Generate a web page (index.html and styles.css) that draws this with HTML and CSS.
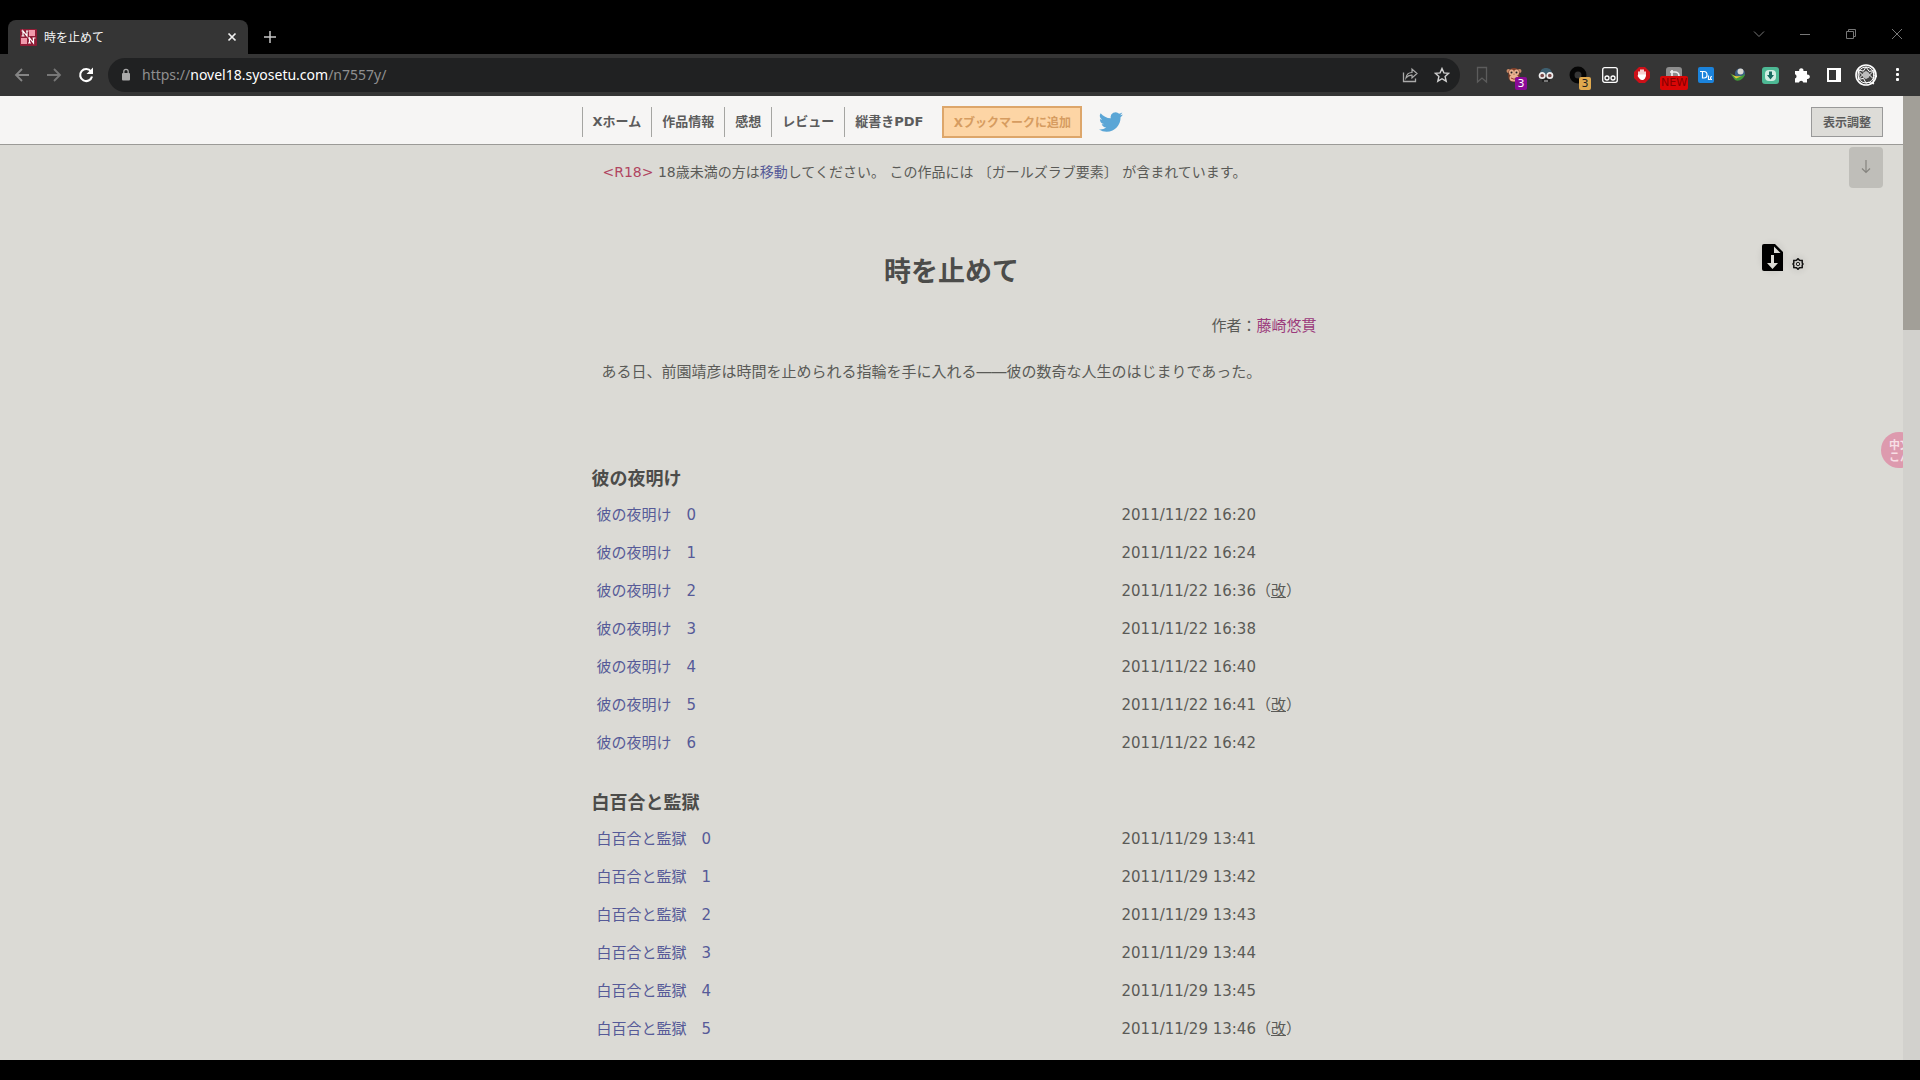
FILE: index.html
```html
<!DOCTYPE html>
<html lang="ja">
<head>
<meta charset="utf-8">
<title>時を止めて</title>
<link rel="stylesheet" href="styles.css">
</head>
<body>
<div class="tabstrip">
  <div class="tab">
    <svg class="favicon" width="17" height="17" viewBox="0 0 17 17"><rect width="17" height="17" rx="1" fill="#8f1c36"/><path d="M9 1h6v6H9zM1 9h6v6H1z" fill="#f09aac"/><path d="M3 7V2l4 5V2M1.500 2H3M6 2h2.500M1.500 7h3M9.500 14V9l4 5V9M8 9h1.500M12.500 9h3M8 14h3" fill="none" stroke="#fff" stroke-width="1.200"/></svg>
    <span class="tab-title">時を止めて</span>
    <button class="plain" aria-label="タブを閉じる"><svg width="10" height="10" viewBox="0 0 10 10"><path d="M1.500 1.500l7 7m0-7l-7 7" stroke="#f0f0f0" stroke-width="1.700"/></svg></button>
  </div>
  <button class="plain new-tab" aria-label="新しいタブ"><svg width="14" height="14" viewBox="0 0 14 14"><path d="M7 1v12M1 7h12" stroke="#c8c8c8" stroke-width="1.500"/></svg></button>
  <div class="window-controls">
    <button class="plain" aria-label="タブを検索"><svg width="12" height="12" viewBox="0 0 12 12"><path d="M1 3.500l5 5 5-5" fill="none" stroke="#777"/></svg></button>
    <button class="plain" aria-label="最小化"><svg width="12" height="12" viewBox="0 0 12 12"><path d="M1 6.500h10" stroke="#777"/></svg></button>
    <button class="plain" aria-label="元に戻す"><svg width="12" height="12" viewBox="0 0 12 12"><path d="M1.500 3.500h7v7h-7zM3.500 3.500v-2h7v7h-2" fill="none" stroke="#777"/></svg></button>
    <button class="plain" aria-label="閉じる"><svg width="12" height="12" viewBox="0 0 12 12"><path d="M1 1l10 10M11 1L1 11" stroke="#777"/></svg></button>
  </div>
</div>

<div class="toolbar">
  <div class="nav-buttons">
    <button class="plain" aria-label="戻る"><svg width="16" height="16" viewBox="0 0 16 16"><path d="M15 8H2M8 2L2 8l6 6" fill="none" stroke="#858585" stroke-width="1.800"/></svg></button>
    <button class="plain" aria-label="進む"><svg width="16" height="16" viewBox="0 0 16 16"><path d="M1 8h13M8 2l6 6-6 6" fill="none" stroke="#777" stroke-width="1.800"/></svg></button>
    <button class="plain" aria-label="再読み込み"><svg width="16" height="16" viewBox="0 0 16 16"><path d="M13 4.500A6 6 0 1 0 14 9.500" fill="none" stroke="#fff" stroke-width="2.100"/><path d="M15 0.500V7H8.500z" fill="#fff"/></svg></button>
  </div>
  <div class="omnibox">
    <svg width="10" height="14" viewBox="0 0 10 14"><rect x="1" y="5" width="8" height="7.500" rx="1" fill="#aaa"/><path d="M2.800 5V3.500a2.200 2.200 0 0 1 4.400 0V5" fill="none" stroke="#aaa" stroke-width="1.300"/></svg>
    <span class="url">https://<span class="host">novel18.syosetu.com</span>/n7557y/</span>
    <button class="plain cell" aria-label="共有"><svg width="16" height="16" viewBox="0 0 16 16"><path d="M1.500 5.500v9h12v-3" fill="none" stroke="#aaa" stroke-width="1.300"/><path d="M4 11c.5-4 3-5.500 6-5.500V2l5 4.500-5 4.500V8.200C7.500 8 5.500 9 4 11z" fill="none" stroke="#aaa" stroke-width="1.200"/></svg></button>
    <button class="plain cell" aria-label="ブックマーク"><svg width="16" height="16" viewBox="0 0 16 16"><path d="M8 1.500l1.900 4.400 4.800.4-3.600 3.200 1.100 4.700L8 11.700l-4.200 2.500 1.100-4.700L1.300 6.300l4.800-.4z" fill="none" stroke="#d0d0d0" stroke-width="1.400"/></svg></button>
  </div>
  <div class="extensions">
    <button class="plain cell" aria-label="読書リスト"><svg width="12" height="18" viewBox="0 0 12 18"><path d="M1.500 1.500h9V16L6 12l-4.500 4z" fill="none" stroke="#5c5c5c" stroke-width="1.300"/></svg></button>
    <button class="plain cell" aria-label="Tampermonkey"><svg width="16" height="16" viewBox="0 0 16 16"><circle cx="2.500" cy="4" r="2" fill="#c98a67"/><circle cx="13.500" cy="4" r="2" fill="#c98a67"/><path d="M8 1c4 0 6 2.500 5.500 5.500 1 5-1.500 8.500-5.500 8.500S1.500 11.500 2.500 6.500C2 3.500 4 1 8 1z" fill="#7c3f2a"/><ellipse cx="5.500" cy="5.500" rx="2.500" ry="3" fill="#e9b391"/><ellipse cx="10.500" cy="5.500" rx="2.500" ry="3" fill="#e9b391"/><ellipse cx="8" cy="11" rx="4.500" ry="3.500" fill="#e9b391"/><circle cx="5.500" cy="5.500" r="1" fill="#222"/><circle cx="10.500" cy="5.500" r="1" fill="#222"/><path d="M5 11q3 2.500 6 0" fill="none" stroke="#933"/></svg><span class="count purple">3</span></button>
    <button class="plain cell" aria-label="シークレット"><svg width="16" height="16" viewBox="0 0 16 16"><path d="M2 7c0-4 2.500-6 6-6s6 2 6 6z" fill="#3e5f70"/><path d="M4 10h8v5H4z" fill="#222"/><circle cx="4.200" cy="8.500" r="2.700" fill="#7a4b4b" stroke="#eee" stroke-width="1.700"/><circle cx="11.800" cy="8.500" r="2.700" fill="#7a4b4b" stroke="#eee" stroke-width="1.700"/><path d="M6 14h4" stroke="#ccc"/></svg></button>
    <button class="plain cell" aria-label="リング"><svg width="18" height="18" viewBox="0 0 18 18"><circle cx="9" cy="9" r="6" fill="none" stroke="#050505" stroke-width="5"/></svg><span class="count amber">3</span></button>
    <button class="plain cell" aria-label="ビューア"><svg width="16" height="16" viewBox="0 0 16 16"><rect x=".7" y=".7" width="14.600" height="14.600" rx="2" fill="none" stroke="#fff" stroke-width="1.300"/><circle cx="5" cy="11" r="2" fill="none" stroke="#fff" stroke-width="1.300"/><circle cx="11" cy="11" r="2" fill="none" stroke="#fff" stroke-width="1.300"/></svg></button>
    <button class="plain cell" aria-label="広告ブロック"><svg width="16" height="16" viewBox="0 0 16 16"><path d="M5 0h6l5 5v6l-5 5H5l-5-5V5z" fill="#cc1018"/><path d="M5 5v3M7 3v5M9 3v5M11 5v4" stroke="#fff" stroke-width="1.600" stroke-linecap="round"/><path d="M4.200 7.500h7.600c0 4-1.500 5.500-3.600 5.500S5 11 3.600 9z" fill="#fff"/></svg></button>
    <button class="plain cell" aria-label="新着"><svg width="16" height="16" viewBox="0 0 16 16"><rect width="16" height="16" rx="3" fill="#8d8d8d"/><path d="M4 5h5a4 4 0 0 1 0 8H6V3" fill="none" stroke="#eee" stroke-width="1.700"/></svg><span class="new-badge">NEW</span></button>
    <button class="plain cell" aria-label="辞書"><svg width="16" height="16" viewBox="0 0 16 16"><rect width="16" height="16" rx="2" fill="#1b83dc"/><path d="M2 4.500h4c4 0 4 6.500 0 6.500H4.500V4.500M10.500 8.500v4h2M14 9.500a1.500 1.500 0 1 0 0 3" fill="none" stroke="#fff" stroke-width="1.200"/></svg></button>
    <button class="plain cell" aria-label="ダウンロード管理"><svg width="16" height="16" viewBox="0 0 16 16"><circle cx="10" cy="6.500" r="5" fill="#3b5f86"/><circle cx="10.500" cy="4.500" r="3" fill="#d9d8d2"/><path d="M0 6c4 4 9 5 15 1-1 5-6 8-10 6z" fill="#3f9b39"/><path d="M0 5.500c3 3.500 7 4.500 12 3.500l-6 2.500z" fill="#e4c93a"/></svg></button>
    <button class="plain cell" aria-label="保存"><svg width="17" height="17" viewBox="0 0 17 17"><rect width="17" height="17" rx="3" fill="#4db894"/><rect x="3" y="3" width="11" height="11" rx="4" fill="#d3eee4"/><path d="M7 4.500h3V8h2l-3.500 4.500L5 8h2z" fill="#17695f"/></svg></button>
    <button class="plain cell" aria-label="拡張機能"><svg width="16" height="16" viewBox="0 0 16 16"><path d="M1 4h4.200a2.200 2.200 0 1 1 4.200 0H13v3.700a2.200 2.200 0 1 1 0 4.200V15.500H9.300a2.200 2.200 0 0 0-4.300 0H1v-4a2.200 2.200 0 0 0 0-4.200z" fill="#fff"/></svg></button>
    <button class="plain cell" aria-label="サイドパネル"><svg width="14" height="14" viewBox="0 0 14 14"><path d="M0 0h14v14H0zM2 2v10h7V2z" fill="#fff" fill-rule="evenodd"/></svg></button>
    <button class="plain cell" aria-label="プロフィール"><svg width="22" height="22" viewBox="0 0 22 22"><circle cx="11" cy="11" r="10" fill="#444" stroke="#fff" stroke-width="1.600"/><g fill="none" stroke="#fff"><circle cx="11" cy="11" r="8"/><path d="M11 3l3.100 4.400 5.300-.8-.9 5.300 4 0-4.400 3.100.6 5-5.200-1.800L11 19l-2.500-4.600-5.200 1 .9-5.200L3 5.600l5.300 1.600z"/><path d="M4 7.500l7 7 7-7M4 14.500l7-7 7 7"/></g><circle cx="11" cy="11" r="3.500" fill="#bbb"/></svg></button>
    <button class="plain cell" aria-label="メニュー"><svg width="4" height="14" viewBox="0 0 4 14"><g fill="#fff"><rect y="0" width="3" height="3" rx="1"/><rect y="5" width="3" height="3" rx="1"/><rect y="10" width="3" height="3" rx="1"/></g></svg></button>
  </div>
</div>

<div class="viewport">
  <div class="page">
    <header class="site-header">
      <nav class="site-nav">
        <a href="#">Xホーム</a><a href="#">作品情報</a><a href="#">感想</a><a href="#">レビュー</a><a href="#">縦書きPDF</a>
        <button class="bookmark">Xブックマークに追加</button>
        <a class="twitter" href="#" aria-label="Twitter"><svg width="24" height="24" viewBox="0 0 24 24"><path fill="#5ba6d6" d="M23.950 4.570a10 10 0 0 1-2.820.770 4.960 4.960 0 0 0 2.160-2.720c-.950.550-2 .950-3.130 1.180a4.920 4.920 0 0 0-8.380 4.480C7.690 8.100 4.070 6.130 1.640 3.160a4.920 4.920 0 0 0 1.520 6.570 4.900 4.900 0 0 1-2.230-.610v.060a4.920 4.920 0 0 0 3.950 4.830 5 5 0 0 1-2.210.080 4.940 4.940 0 0 0 4.600 3.420A9.870 9.870 0 0 1 0 19.540a14 14 0 0 0 7.550 2.210c9.050 0 14-7.500 14-13.980 0-.210 0-.420-.020-.630a9.940 9.940 0 0 0 2.420-2.570z"/></svg></a>
      </nav>
      <button class="display-settings">表示調整</button>
    </header>

    <button class="jump-down" aria-label="下へ"><svg width="10" height="15" viewBox="0 0 10 15"><path d="M5 1v12M1 9.500l4 4 4-4" fill="none" stroke="#85847f" stroke-width="1.200"/></svg></button>
    <div class="save-tools">
      <button class="plain halo" aria-label="ダウンロード"><svg width="21" height="27" viewBox="0 0 21 27"><path d="M2 0h11l8 8v19H2a2 2 0 0 1-2-2V2a2 2 0 0 1 2-2z" fill="#000"/><path d="M12 2.500V9h6.500z" fill="#dbdad5"/><path d="M9 11h3v8h4l-5.500 6L5 19h4z" fill="#dbdad5"/></svg></button>
      <button class="plain halo" aria-label="設定"><svg width="12" height="12" viewBox="0 0 12 12"><path d="M4.500 2.200L6 .7l1.500 1.500 2.700.200v2.500L11 6l-.8 1.200v2.400l-2.700.200L6 11.300 4.500 9.800l-2.700-.2V7.200L1 6l.8-1.100V2.400z" fill="none" stroke="#111" stroke-width="1.500"/><circle cx="6" cy="6" r="1.700" fill="none" stroke="#222"/></svg></button>
    </div>
    <button class="translate" aria-label="翻訳">中文<br>こん</button>

    <main class="novel">
      <p class="notice"><span class="r18">&lt;R18&gt;</span> 18歳未満の方は<a href="#">移動</a>してください。 この作品には 〔ガールズラブ要素〕 が含まれています。</p>
      <h1>時を止めて</h1>
      <p class="author">作者：<a href="#">藤崎悠貫</a></p>
      <p class="summary">ある日、前園靖彦は時間を止められる指輪を手に入れる――彼の数奇な人生のはじまりであった。</p>

      <section class="chapter">
        <h2>彼の夜明け</h2>
        <table>
          <tr><td><a href="#">彼の夜明け　0</a></td><td>2011/11/22 16:20</td></tr>
          <tr><td><a href="#">彼の夜明け　1</a></td><td>2011/11/22 16:24</td></tr>
          <tr><td><a href="#">彼の夜明け　2</a></td><td>2011/11/22 16:36（<u>改</u>）</td></tr>
          <tr><td><a href="#">彼の夜明け　3</a></td><td>2011/11/22 16:38</td></tr>
          <tr><td><a href="#">彼の夜明け　4</a></td><td>2011/11/22 16:40</td></tr>
          <tr><td><a href="#">彼の夜明け　5</a></td><td>2011/11/22 16:41（<u>改</u>）</td></tr>
          <tr><td><a href="#">彼の夜明け　6</a></td><td>2011/11/22 16:42</td></tr>
        </table>
      </section>
      <section class="chapter">
        <h2>白百合と監獄</h2>
        <table>
          <tr><td><a href="#">白百合と監獄　0</a></td><td>2011/11/29 13:41</td></tr>
          <tr><td><a href="#">白百合と監獄　1</a></td><td>2011/11/29 13:42</td></tr>
          <tr><td><a href="#">白百合と監獄　2</a></td><td>2011/11/29 13:43</td></tr>
          <tr><td><a href="#">白百合と監獄　3</a></td><td>2011/11/29 13:44</td></tr>
          <tr><td><a href="#">白百合と監獄　4</a></td><td>2011/11/29 13:45</td></tr>
          <tr><td><a href="#">白百合と監獄　5</a></td><td>2011/11/29 13:46（<u>改</u>）</td></tr>
        </table>
      </section>
    </main>
  </div>
  <div class="scrollbar"><div class="thumb"></div></div>
</div>
</body>
</html>
```
FILE: styles.css
```css
* { box-sizing: border-box; }

body {
  margin: 0;
  padding-bottom: 20px;
  height: 100vh;
  display: flex;
  flex-direction: column;
  overflow: hidden;
  background: #000;
  color: #5a5a57;
  font-family: "DejaVu Sans", "Noto Sans CJK JP", sans-serif;
  font-size: 15px;
  line-height: 24px;
}

p, h1, h2 { margin: 0; }
a { color: #565a98; text-decoration: none; }
svg { display: block; flex: none; }
button { font-family: inherit; }

.plain {
  display: flex;
  align-items: center;
  justify-content: center;
  padding: 0;
  border: 0;
  background: none;
}

/* Browser frame */
.tabstrip {
  flex: none;
  display: flex;
  height: 54px;
  padding: 20px 0 0 8px;
}

.tab {
  display: flex;
  align-items: center;
  gap: 7px;
  width: 240px;
  padding: 0 11px 0 12px;
  border-radius: 8px 8px 0 0;
  background: #353535;
}

.tab-title {
  flex: 1;
  padding-top: 2px;
  color: #f2f2f2;
  font-family: "Noto Sans", "Noto Sans CJK JP", sans-serif;
  font-size: 12px;
}

.new-tab { width: 44px; }

.window-controls {
  display: flex;
  align-items: center;
  margin-left: auto;
  padding-bottom: 6px;
}
.window-controls .plain { width: 46px; }

.toolbar {
  flex: none;
  display: flex;
  align-items: center;
  height: 42px;
  padding: 0 6px;
  background: #353535;
}

.nav-buttons { display: flex; width: 102px; }
.nav-buttons .plain { width: 32px; }

.omnibox {
  flex: 1;
  display: flex;
  align-items: center;
  height: 34px;
  padding: 0 2px 0 13px;
  border-radius: 17px;
  background: #202122;
}

.url {
  flex: 1;
  padding-left: 11px;
  color: #8f8f8f;
  font-family: "Noto Sans", sans-serif;
  font-size: 14px;
}
.host { color: #fff; }

.extensions { display: flex; padding-left: 6px; }

.cell { position: relative; width: 32px; height: 32px; }

.count {
  position: absolute;
  right: 3px;
  bottom: 1px;
  width: 12px;
  height: 13px;
  border-radius: 2px;
  font-size: 11px;
  line-height: 13px;
}
.purple { background: #8b0a97; color: #fff; }
.amber { background: #e0a94e; color: #222; }

.new-badge {
  position: absolute;
  left: 2px;
  bottom: 1px;
  width: 28px;
  height: 14px;
  border-radius: 2px;
  background: #d90606;
  color: #860000;
  font-size: 11px;
  line-height: 14px;
}

/* Page */
.viewport {
  flex: 1;
  min-height: 0;
  display: flex;
  overflow: hidden;
  background: #dbdad5;
}

.page { position: relative; flex: 1; overflow: hidden; }

.site-header {
  display: flex;
  align-items: center;
  justify-content: center;
  height: 49px;
  padding-top: 3px;
  border-bottom: 1px solid #9b9a97;
  background: #f6f5f4;
}

.site-nav { display: flex; align-items: center; width: 740px; }

.site-nav a {
  padding: 0 10px;
  border-left: 1px solid #a5a5a2;
  color: #5c5c5c;
  font-family: "DejaVu Sans", "Noto Sans CJK JP", sans-serif;
  font-size: 13px;
  font-weight: bold;
  line-height: 30px;
}

.bookmark {
  width: 140px;
  height: 32px;
  margin-left: 9px;
  padding: 0;
  border: 2px solid #dda66a;
  background: #fdd5a5;
  color: #d69c60;
  font-size: 12px;
  font-weight: bold;
}

.site-nav .twitter { padding: 0; margin-left: 17px; border: 0; }

.display-settings {
  position: absolute;
  top: 11px;
  right: 20px;
  width: 72px;
  height: 30px;
  padding: 0 0 2px;
  border: 1px solid #999;
  background: #dddcd8;
  color: #5c5c5c;
  font-size: 12px;
  font-weight: bold;
}

.jump-down {
  position: absolute;
  top: 51px;
  right: 20px;
  display: flex;
  justify-content: center;
  width: 34px;
  height: 41px;
  padding: 12px 0 0;
  border: 0;
  border-radius: 4px;
  background: #bfbeb9;
}

.save-tools {
  position: absolute;
  top: 148px;
  right: 99px;
  display: flex;
  align-items: flex-end;
  gap: 9px;
}
.halo {
  border-radius: 50%;
  box-shadow: 0 0 6px 2px rgba(0, 0, 0, 0.06);
  background: rgba(0, 0, 0, 0.05);
}
.save-tools .halo:last-child { margin-bottom: 1px; }

.translate {
  position: absolute;
  top: 336px;
  right: -15px;
  width: 37px;
  height: 36px;
  padding: 3px 0 0 8px;
  border: 0;
  border-radius: 18px;
  background: #dd9aae;
  color: #f7dfe5;
  font-size: 11px;
  font-weight: bold;
  line-height: 12px;
  text-align: left;
  white-space: nowrap;
  overflow: hidden;
}

.novel { width: 730px; margin: 0 auto; padding-top: 15px; }

.notice { padding-left: 16px; font-size: 14px; white-space: nowrap; }
.r18 { color: #b04560; }

.novel h1 {
  margin-top: 68px;
  color: #4c4c4a;
  font-size: 27px;
  line-height: 40px;
  text-align: center;
}

.author { margin-top: 22px; text-align: right; }
.author a { color: #9b3a7c; }

.summary { margin-top: 22px; margin-bottom: 80px; padding-left: 15px; }

.chapter { margin-bottom: 26px; padding-left: 5px; }

.chapter h2 {
  margin-bottom: 2px;
  color: #4c4c4a;
  font-size: 18px;
  line-height: 30px;
}

.chapter table {
  width: 100%;
  table-layout: fixed;
  border-collapse: collapse;
}

.chapter td { height: 38px; padding: 0 0 0 5px; }
.chapter td:last-child { width: 200px; }

.scrollbar { width: 17px; background: #d2d1cd; }
.thumb { height: 234px; background: #a29f98; }
```
